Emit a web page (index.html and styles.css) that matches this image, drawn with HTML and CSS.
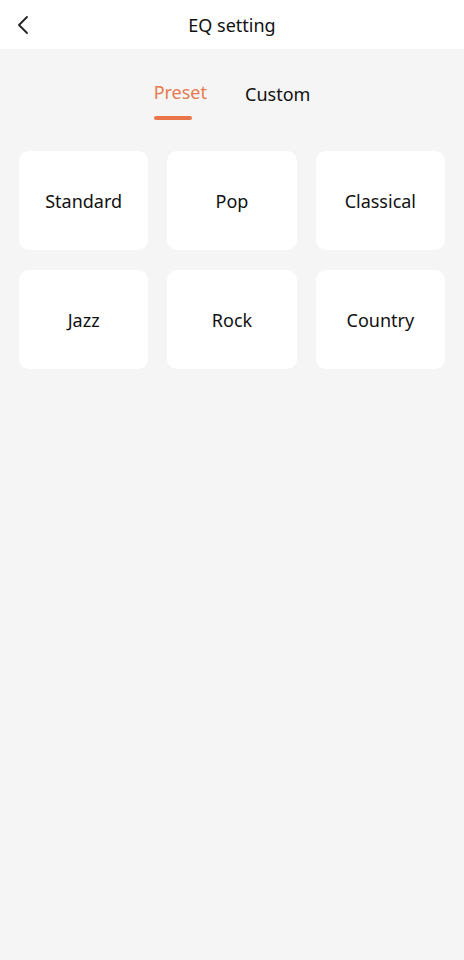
FILE: index.html
```html
<!DOCTYPE html>
<html>
    <head>
        <title>EQ setting</title>
        <link rel="stylesheet" href="styles.css">
    </head>
    <body>
        <header class="topbar">
            <a class="back" href="#">
                <svg width="14" height="20" viewBox="0 0 14 20"><path d="M11 2 L3 10 L11 18" fill="none" stroke="#222" stroke-width="1.8" stroke-linecap="round" stroke-linejoin="round"/></svg>
            </a>
            <h1>EQ setting</h1>
        </header>
        <div class="tabs">
            <div class="tab active">Preset<span class="bar"></span></div>
            <div class="tab">Custom</div>
        </div>
        <div class="grid">
            <div class="card">Standard</div>
            <div class="card">Pop</div>
            <div class="card">Classical</div>
            <div class="card">Jazz</div>
            <div class="card">Rock</div>
            <div class="card">Country</div>
        </div>
    </body>
</html>
```
FILE: styles.css
```css
body {
    margin: 0;
    padding: 0;
    font-family: "Noto Sans", Roboto, sans-serif;
    background-color: #f5f5f5;
    color: #111;
    height: 960px;
}

.topbar {
    background-color: #fff;
    height: 49px;
    display: flex;
    align-items: center;
    justify-content: center;
    position: relative;
}

.topbar h1 {
    margin: 0;
    font-size: 18px;
    font-weight: 400;
}

.back {
    position: absolute;
    left: 16px;
    top: 15px;
    display: block;
}

.tabs {
    display: flex;
    justify-content: center;
    gap: 38px;
    padding-top: 29px;
    height: 73px;
    box-sizing: border-box;
}

.tab {
    font-size: 18px;
    line-height: 32px;
    position: relative;
    height: 42px;
}

.tab.active {
    color: #e87a50;
    margin-top: -2px;
}

.tab .bar {
    position: absolute;
    left: 0;
    top: 40px;
    width: 38px;
    height: 4px;
    border-radius: 2px;
    background-color: #e8764a;
}

.grid {
    display: grid;
    grid-template-columns: repeat(3, 1fr);
    gap: 20px 19px;
    padding: 29px 19px 0;
}

.card {
    background-color: #fff;
    border-radius: 10px;
    height: 99px;
    display: flex;
    align-items: center;
    justify-content: center;
    font-size: 18px;
}
```
